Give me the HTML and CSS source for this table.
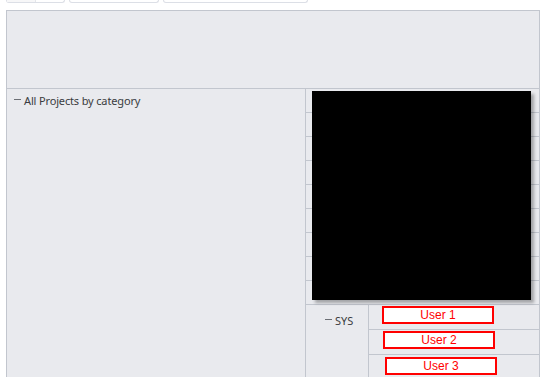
FILE: index.html
```html
<html>

<head>
    <meta charset="UTF-8">
    <meta name="viewport" content="width=device-width, initial-scale=1.0">
    <title>Projects</title>
    <link rel="stylesheet" href="styles.css">
</head>

<body>
    <div class="tabs">
        <div class="tab tab-split"><span></span><span></span></div>
        <div class="tab tab-mid"></div>
        <div class="tab tab-wide"></div>
    </div>

    <div class="panel">
        <div class="panel-head"></div>
        <div class="panel-body">
            <div class="tree">
                <div class="tree-node"><span class="minus"></span>All Projects by category</div>
            </div>
            <div class="grid">
                <div class="preview"></div>
                <div class="row"></div>
                <div class="row"></div>
                <div class="row"></div>
                <div class="row"></div>
                <div class="row"></div>
                <div class="row"></div>
                <div class="row"></div>
                <div class="row"></div>
                <div class="row"></div>
                <div class="group">
                    <div class="group-name"><span class="minus"></span>SYS</div>
                    <div class="users">
                        <div class="user-row"><div class="user u1">User 1</div></div>
                        <div class="user-row"><div class="user u2">User 2</div></div>
                        <div class="user-row"><div class="user u3">User 3</div></div>
                    </div>
                </div>
            </div>
        </div>
    </div>
</body>

</html>
```

FILE: styles.css
```css
body {
    margin: 0;
    background-color: #ffffff;
    font-family: "Noto Sans", "Open Sans", sans-serif;
    overflow: hidden;
}

.tabs {
    display: flex;
    gap: 4px;
    padding-left: 6px;
    height: 3px;
}

.tab {
    height: 2px;
    border: 1px solid #dcdfe6;
    border-top: none;
    border-radius: 0 0 3px 3px;
    background-color: #ffffff;
}

.tab-split {
    width: 57px;
    display: flex;
}

.tab-split span {
    flex: 1;
}

.tab-split span:first-child {
    border-right: 1px solid #e4e6ea;
    background-color: #f7f7f8;
}

.tab-mid {
    width: 88px;
}

.tab-wide {
    width: 143px;
}

.panel {
    margin: 7px 0 0 6px;
    width: 532px;
    border: 1px solid #c2c6ce;
    background-color: #e9eaee;
}

.panel-head {
    height: 77px;
    border-bottom: 1px solid #c2c6ce;
}

.panel-body {
    display: grid;
    grid-template-columns: 299px 1fr;
    height: 300px;
}

.tree {
    border-right: 1px solid #c2c6ce;
    padding: 4px 0 0 7px;
}

.tree-node {
    font-size: 11px;
    color: #3a3c40;
    display: flex;
    align-items: center;
    letter-spacing: -0.15px;
}

.minus {
    display: inline-block;
    width: 7px;
    height: 1px;
    background-color: #6c6f75;
    margin-right: 3px;
    margin-top: -3px;
}

.grid {
    position: relative;
}

.row {
    height: 23px;
    border-bottom: 1px solid #c2c6ce;
}

/* the dark preview sits over the first rows */
.preview {
    position: absolute;
    left: 6px;
    top: 2px;
    width: 219px;
    height: 209px;
    background-color: #000000;
    box-shadow: 3px 3px 3px rgba(0, 0, 0, 0.3);
}

.group {
    display: flex;
}

.group-name {
    width: 63px;
    border-right: 1px solid #c2c6ce;
    font-size: 11px;
    color: #3a3c40;
    display: flex;
    align-items: flex-start;
    padding: 8px 0 0 19px;
    box-sizing: border-box;
    height: 72px;
}

.group-name .minus {
    margin-top: 6px;
}

.users {
    flex: 1;
}

.user-row {
    height: 23px;
    border-bottom: 1px solid #c2c6ce;
}

.user {
    width: 108px;
    height: 14px;
    border: 2px solid #ff0000;
    background-color: #ffffff;
    color: #ff0000;
    font-family: "Liberation Sans", Arial, sans-serif;
    font-size: 12px;
    line-height: 14px;
    text-align: center;
}

.u1 {
    margin: 1px 0 0 13px;
}

.u2 {
    margin: 1px 0 0 14px;
}

.u3 {
    margin: 2px 0 0 16px;
}
```
